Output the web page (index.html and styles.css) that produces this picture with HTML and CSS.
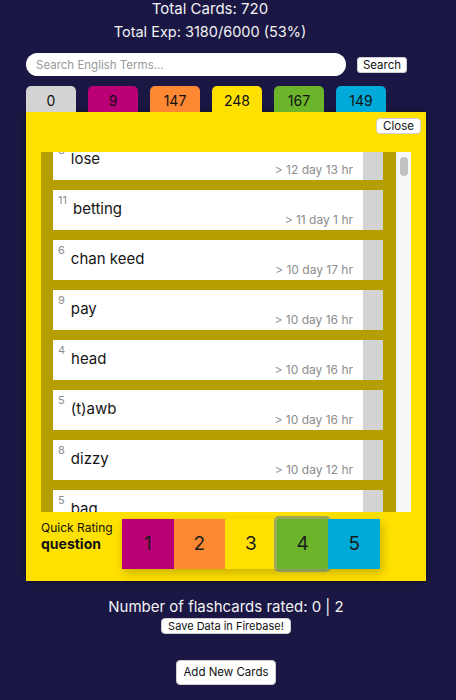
FILE: index.html
```html
<!DOCTYPE html>
<html>
<head>
<meta charset="utf-8">
<link rel="stylesheet" href="styles.css">
</head>
<body>
<div class="page">
  <div class="stats">
    <div class="total-cards">Total Cards: 720</div>
    <div class="total-exp">Total Exp: 3180/6000 (53%)</div>
  </div>
  <div class="search-row">
    <input class="search-input" type="text" placeholder="Search English Terms...">
    <button class="btn search-btn">Search</button>
  </div>
  <div class="tabs">
    <div class="tab tab-0">0</div>
    <div class="tab tab-1">9</div>
    <div class="tab tab-2">147</div>
    <div class="tab tab-3">248</div>
    <div class="tab tab-4">167</div>
    <div class="tab tab-5">149</div>
  </div>
  <div class="panel">
    <div class="panel-head">
      <button class="btn close-btn">Close</button>
    </div>
    <div class="list-wrap">
      <div class="list-view">
        <div class="list">
          <div class="card"><div class="card-main"><div class="row"><span class="num">8</span><span class="word">lose</span></div><div class="time">&gt; 12 day 13 hr</div></div></div>
          <div class="card"><div class="card-main"><div class="row"><span class="num">11</span><span class="word">betting</span></div><div class="time">&gt; 11 day 1 hr</div></div></div>
          <div class="card"><div class="card-main"><div class="row"><span class="num">6</span><span class="word">chan keed</span></div><div class="time">&gt; 10 day 17 hr</div></div></div>
          <div class="card"><div class="card-main"><div class="row"><span class="num">9</span><span class="word">pay</span></div><div class="time">&gt; 10 day 16 hr</div></div></div>
          <div class="card"><div class="card-main"><div class="row"><span class="num">4</span><span class="word">head</span></div><div class="time">&gt; 10 day 16 hr</div></div></div>
          <div class="card"><div class="card-main"><div class="row"><span class="num">5</span><span class="word">(t)awb</span></div><div class="time">&gt; 10 day 16 hr</div></div></div>
          <div class="card"><div class="card-main"><div class="row"><span class="num">8</span><span class="word">dizzy</span></div><div class="time">&gt; 10 day 12 hr</div></div></div>
          <div class="card"><div class="card-main"><div class="row"><span class="num">5</span><span class="word">bag</span></div><div class="time">&gt; 10 day 11 hr</div></div></div>
        </div>
      </div>
      <div class="scrollbar"><div class="thumb"></div></div>
    </div>
    <div class="rating-row">
      <div class="rating-label">
        <div class="qr">Quick Rating</div>
        <div class="q">question</div>
      </div>
      <div class="rating-group">
        <div class="rate r1">1</div>
        <div class="rate r2">2</div>
        <div class="rate r3">3</div>
        <div class="rate r4">4</div>
        <div class="rate r5">5</div>
      </div>
    </div>
  </div>
  <div class="footer">
    <div class="rated">Number of flashcards rated: 0 | 2</div>
    <button class="btn save-btn">Save Data in Firebase!</button>
    <button class="btn add-btn">Add New Cards</button>
  </div>
</div>
</body>
</html>
```

FILE: styles.css
```css
* { box-sizing: border-box; }
html, body {
  margin: 0;
  padding: 0;
  background: #1b1745;
  height: 100%;
}
body {
  font-family: Inter, "Noto Sans", "Liberation Sans", sans-serif;
  color: #fff;
}
.page {
  width: 400px;
  margin-left: 26px;
}
.stats {
  text-align: center;
  color: #f2f2f2;
  padding-right: 32px;
}
.total-cards {
  font-size: 15px;
  line-height: 18px;
}
.total-exp {
  font-size: 14.5px;
  line-height: 18px;
  margin-top: 5px;
}
.search-row {
  display: flex;
  align-items: center;
  margin-top: 12px;
  height: 23px;
}
.search-input {
  width: 320px;
  height: 23px;
  border: none;
  border-radius: 12px;
  padding: 0 10px;
  font-family: Inter, "Noto Sans", sans-serif;
  font-size: 11.5px;
  outline: none;
  background: #fff;
}
.search-input::placeholder { color: #9a9a9a; }
.btn {
  font-family: Inter, "Noto Sans", sans-serif;
  background: #fff;
  color: #111;
  border: 1px solid #cfcfcf;
  border-radius: 4px;
  padding: 0;
  margin: 0;
}
.search-btn {
  margin-left: 11px;
  width: 50px;
  height: 16px;
  font-size: 11.5px;
  line-height: 14px;
  border-radius: 3px;
}
.tabs {
  display: flex;
  gap: 12px;
  margin-top: 10px;
}
.tab {
  width: 50px;
  height: 26px;
  padding-top: 4px;
  line-height: 22px;
  text-align: center;
  font-size: 14px;
  color: #111;
  border-radius: 5px 5px 0 0;
}
.tab-0 { background: #d3d3d3; }
.tab-1 { background: #bb0077; }
.tab-2 { background: #ff8833; }
.tab-3 { background: #ffe100; }
.tab-4 { background: #6cb52a; }
.tab-5 { background: #00aad8; }
.panel {
  background: #ffe100;
  height: 469px;
  padding: 6px 15px 12px 15px;
  box-shadow: 0 0 9px rgba(0, 0, 0, 0.45);
}
.panel-head {
  display: flex;
  justify-content: flex-end;
  margin-right: -10px;
  height: 16px;
}
.close-btn {
  width: 45px;
  height: 16px;
  font-size: 11.5px;
  line-height: 14px;
}
.list-wrap {
  display: flex;
  margin-top: 18px;
  height: 360px;
}
.list-view {
  width: 355px;
  height: 360px;
  overflow: hidden;
  background: #b59f00;
}
.list {
  padding: 0 13px 0 12px;
  margin-top: -12px;
}
.card {
  height: 40px;
  margin-bottom: 10px;
  background: #fff;
  border-right: 20px solid #d3d3d3;
}
.card-main {
  padding: 4px 10px 0 4px;
  color: #111;
}
.row {
  display: flex;
  align-items: flex-start;
  gap: 6px;
}
.num {
  font-size: 11px;
  line-height: 13px;
  color: #8e8e8e;
  padding-left: 1px;
}
.word {
  font-size: 15px;
  line-height: 18px;
  margin-top: 6px;
  color: #151515;
}
.time {
  margin-top: -5px;
  text-align: right;
  font-size: 12px;
  line-height: 14px;
  color: #8c8c8c;
}
.scrollbar {
  width: 15px;
  height: 360px;
  background: #f8f8f8;
  border-left: 1px solid #ededed;
  padding: 5px 3px 0 3px;
}
.thumb {
  width: 8px;
  height: 19px;
  border-radius: 4px;
  background: #c2c2c2;
}
.rating-row {
  display: flex;
  align-items: flex-start;
  margin-top: 7px;
}
.rating-label {
  width: 81px;
  color: #111;
  padding-top: 1px;
}
.qr {
  font-size: 12px;
  line-height: 15px;
}
.q {
  font-size: 14px;
  font-weight: 700;
  line-height: 18px;
}
.rating-group {
  display: flex;
  height: 50px;
  box-shadow: 2px 4px 10px rgba(0, 0, 0, 0.22);
}
.rate {
  width: 51.6px;
  height: 50px;
  line-height: 50px;
  text-align: center;
  font-size: 19px;
  color: #1a1a1a;
}
.r1 { background: #bb0077; }
.r2 { background: #ff8833; }
.r3 { background: #ffe100; }
.r4 {
  background: #6cb52a;
  outline: 3px solid rgba(60, 120, 175, 0.5);
  outline-offset: 0;
  border-radius: 2px;
}
.r5 { background: #00aad8; }
.footer {
  display: flex;
  flex-direction: column;
  align-items: center;
  margin-top: 17px;
}
.rated {
  font-size: 15px;
  line-height: 18px;
  color: #f2f2f2;
}
.save-btn {
  margin-top: 2px;
  height: 16px;
  padding: 0 6px;
  font-size: 11px;
  line-height: 14px;
}
.add-btn {
  margin-top: 26px;
  height: 25px;
  padding: 0 6px;
  font-size: 11.5px;
  line-height: 23px;
  border-radius: 4px;
}
```
